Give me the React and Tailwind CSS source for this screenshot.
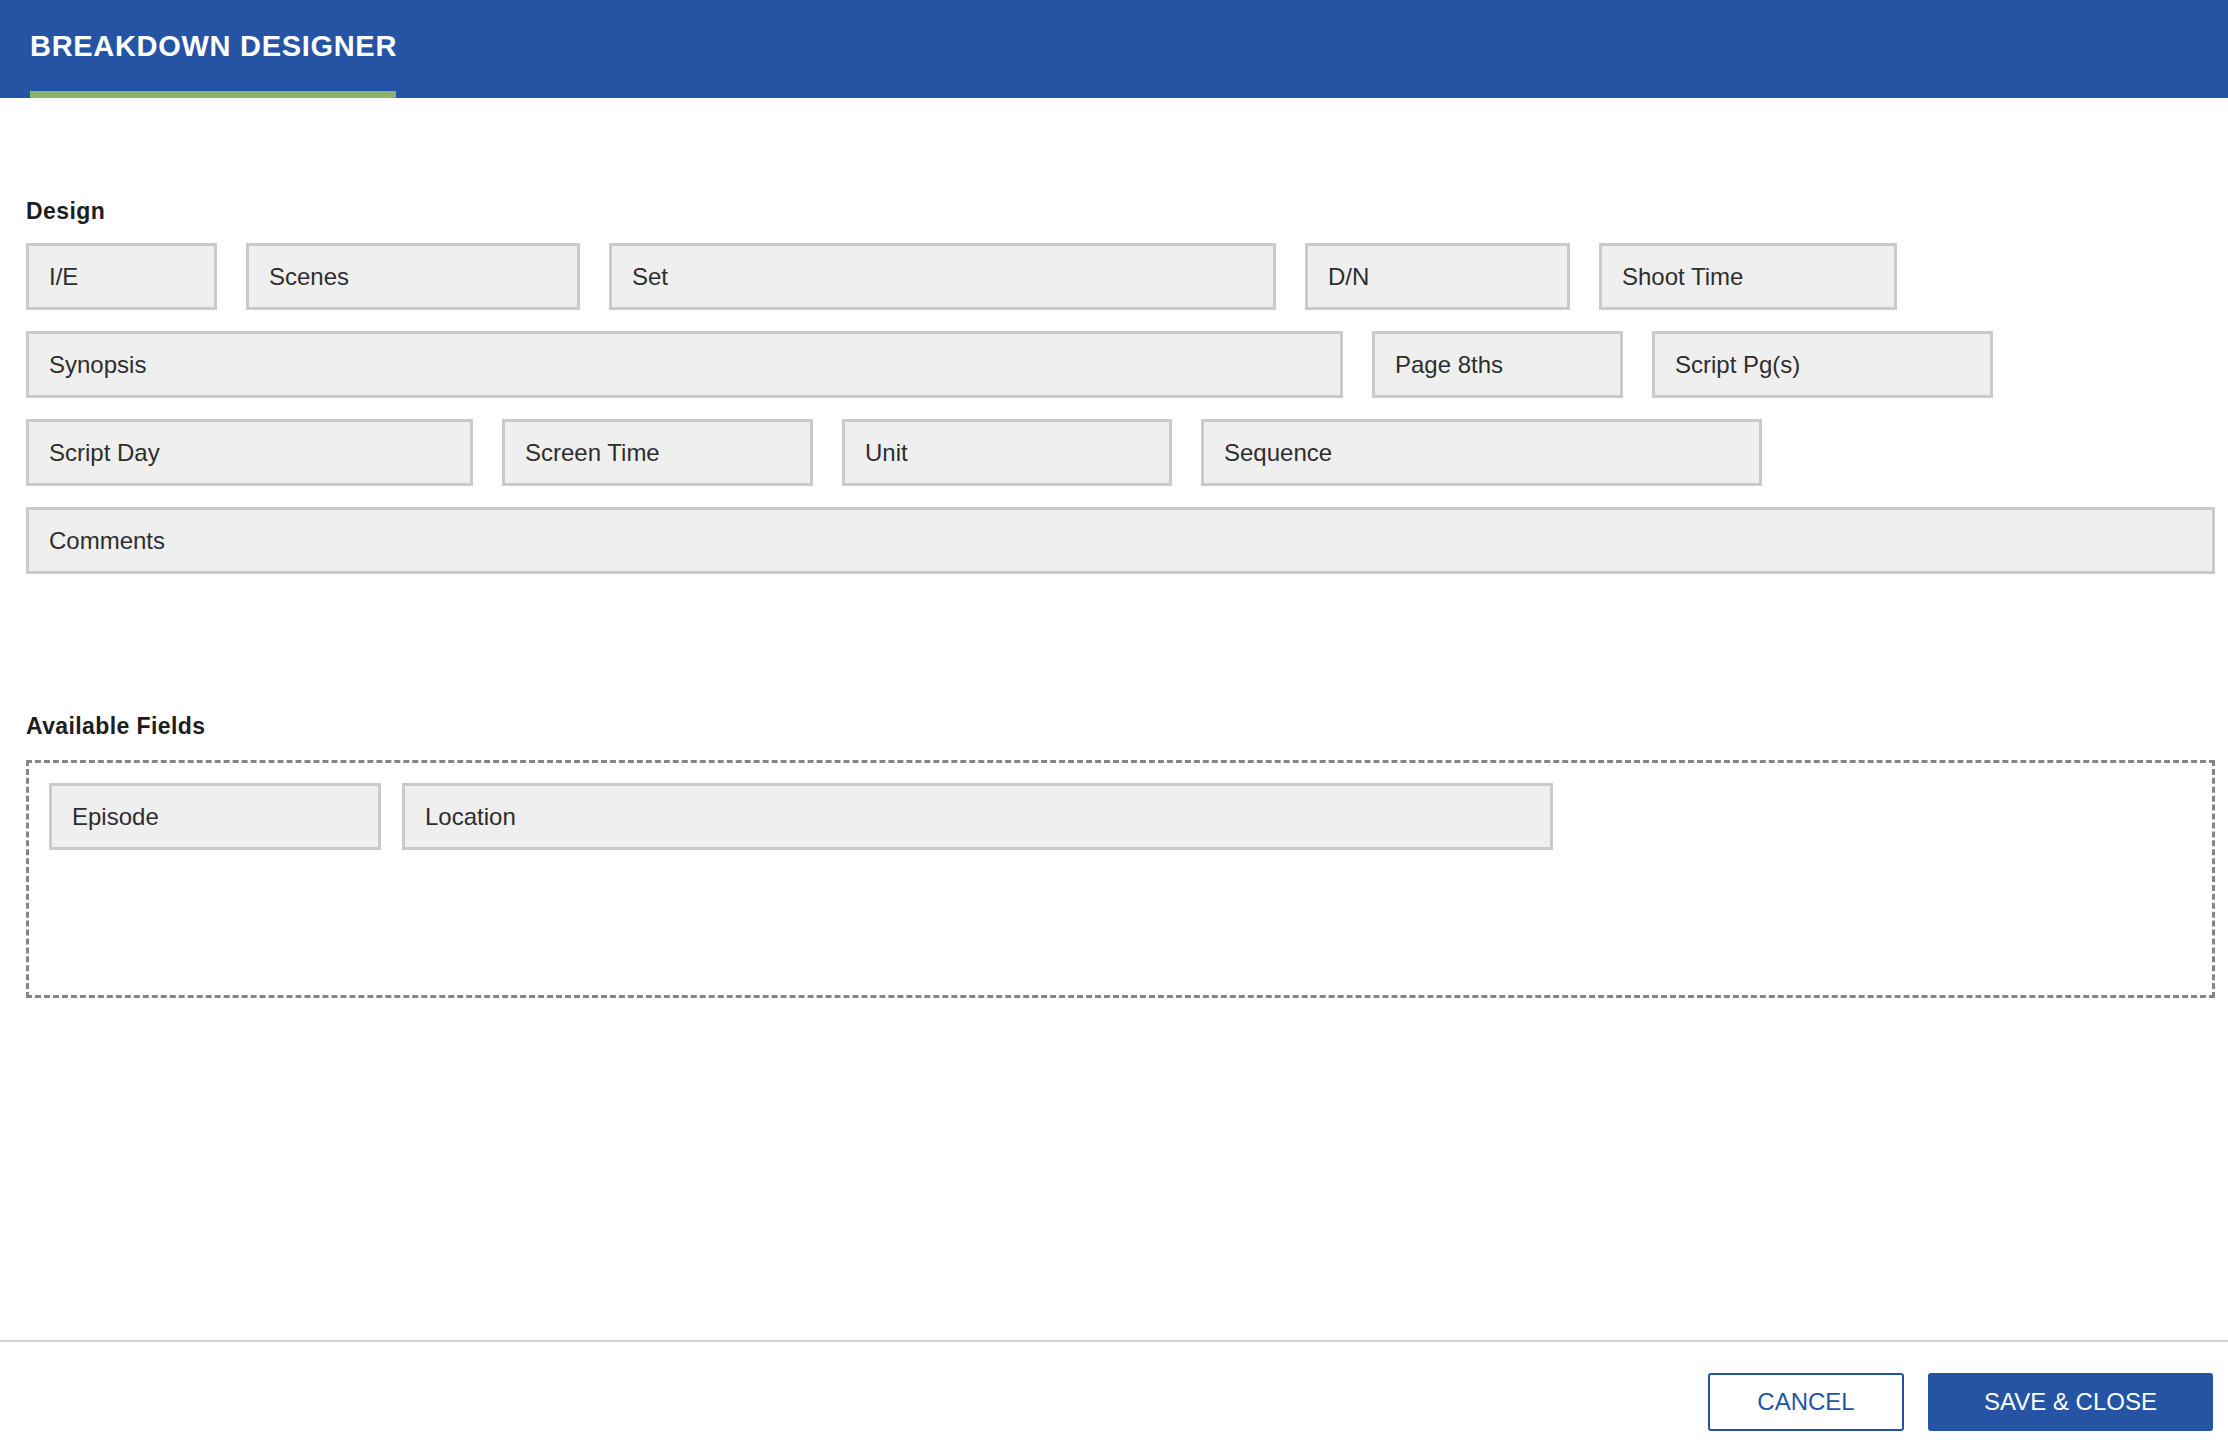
import React from 'react';

const designRows = [
    [
        { label: 'I/E', w: 'w-[191px]' },
        { label: 'Scenes', w: 'w-[334px]' },
        { label: 'Set', w: 'w-[667px]' },
        { label: 'D/N', w: 'w-[265px]' },
        { label: 'Shoot Time', w: 'w-[298px]' },
    ],
    [
        { label: 'Synopsis', w: 'w-[1317px]' },
        { label: 'Page 8ths', w: 'w-[251px]' },
        { label: 'Script Pg(s)', w: 'w-[341px]' },
    ],
    [
        { label: 'Script Day', w: 'w-[447px]' },
        { label: 'Screen Time', w: 'w-[311px]' },
        { label: 'Unit', w: 'w-[330px]' },
        { label: 'Sequence', w: 'w-[561px]' },
    ],
    [{ label: 'Comments', w: 'w-full' }],
];

const availableFields = [
    { label: 'Episode', w: 'w-[332px]' },
    { label: 'Location', w: 'w-[1151px]' },
];

const FieldBox = ({ label, w }) => (
    <div className={`${w} h-[67px] flex items-center pl-[20px] bg-[#efefef] border-[3px] border-[#cacaca] text-[24px] text-[#2e2e2e] shrink-0`}>
        {label}
    </div>
);

const App = () => {
    return (
        <div className="flex flex-col h-screen bg-white font-['Liberation_Sans',Arial,sans-serif]">
            {/* header */}
            <header className="h-[98px] bg-[#2454a3] flex flex-col justify-between px-[30px] shrink-0">
                <h1 className="pt-[30px] text-[29px] leading-[32px] font-bold text-white tracking-[0.7px]">
                    BREAKDOWN DESIGNER
                </h1>
                <div className="w-[366px] h-[7px] bg-[#8ab46d]" />
            </header>

            <main className="flex-1 pt-[100px] pl-[26px] pr-[13px]">
                <h2 className="text-[23px] leading-[26px] font-bold tracking-[0.4px] text-[#1e1e1e] mb-[19px]">Design</h2>
                <div className="flex flex-col gap-y-[21px]">
                    {designRows.map((row, i) => (
                        <div key={i} className="flex gap-x-[29px]">
                            {row.map((f) => (
                                <FieldBox key={f.label} label={f.label} w={f.w} />
                            ))}
                        </div>
                    ))}
                </div>

                <h2 className="mt-[139px] text-[23px] leading-[26px] font-bold tracking-[0.4px] text-[#1e1e1e] mb-[21px]">Available Fields</h2>
                <div className="h-[238px] border-[3px] border-dashed border-[#858585] p-[20px] flex items-start gap-x-[21px]">
                    {availableFields.map((f) => (
                        <FieldBox key={f.label} label={f.label} w={f.w} />
                    ))}
                </div>
            </main>

            {/* footer */}
            <footer className="border-t-2 border-[#d4d4d4] pt-[31px] pb-[25px] pr-[15px] flex justify-end gap-x-[24px] shrink-0">
                <button className="w-[196px] h-[58px] border-2 border-[#2454a3] rounded-[3px] text-[24px] text-[#2454a3] bg-white">
                    CANCEL
                </button>
                <button className="w-[285px] h-[58px] rounded-[3px] text-[24px] text-white bg-[#2454a3]">
                    SAVE &amp; CLOSE
                </button>
            </footer>
        </div>
    );
};

export default App;
